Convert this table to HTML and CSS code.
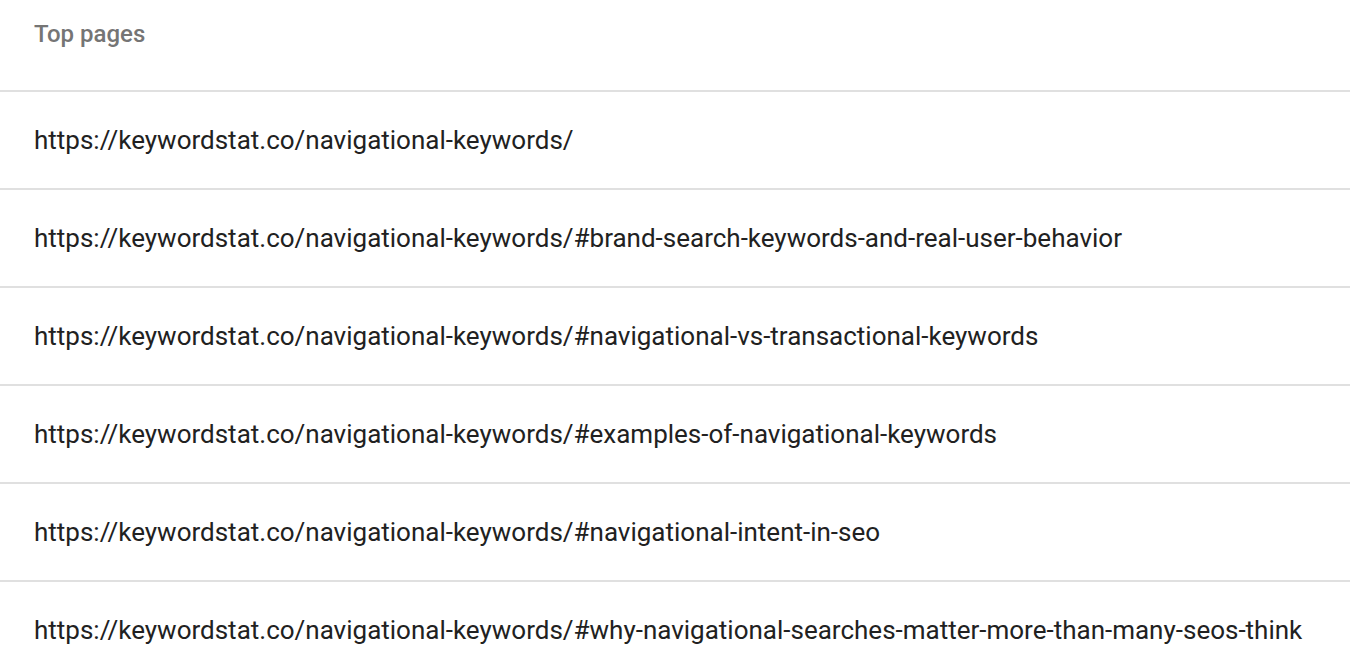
FILE: index.html
```html
<!DOCTYPE html>
<html>
<head>
<meta charset="utf-8">
<link rel="stylesheet" href="styles.css">
</head>
<body>
<div class="table">
  <div class="head">Top pages</div>
  <div class="row">https://keywordstat.co/navigational-keywords/</div>
  <div class="row">https://keywordstat.co/navigational-keywords/#brand-search-keywords-and-real-user-behavior</div>
  <div class="row">https://keywordstat.co/navigational-keywords/#navigational-vs-transactional-keywords</div>
  <div class="row">https://keywordstat.co/navigational-keywords/#examples-of-navigational-keywords</div>
  <div class="row">https://keywordstat.co/navigational-keywords/#navigational-intent-in-seo</div>
  <div class="row">https://keywordstat.co/navigational-keywords/#why-navigational-searches-matter-more-than-many-seos-think</div>
</div>
</body>
</html>
```
FILE: styles.css
```css
html, body {
  margin: 0;
  padding: 0;
  background: #ffffff;
}
body {
  font-family: Roboto, "Liberation Sans", sans-serif;
  overflow: hidden;
}
.table {
  display: flex;
  flex-direction: column;
}
.head {
  height: 92px;
  flex-shrink: 0;
  box-sizing: border-box;
  padding: 20px 34px 0;
  font-size: 24px;
  line-height: 28px;
  font-weight: 500;
  color: #757575;
  border-bottom: 2px solid #e0e0e0;
}
.row {
  height: 98px;
  flex-shrink: 0;
  box-sizing: border-box;
  display: flex;
  align-items: center;
  padding: 0 34px;
  font-size: 26px;
  color: #212121;
  white-space: nowrap;
  border-bottom: 2px solid #e0e0e0;
}
```
